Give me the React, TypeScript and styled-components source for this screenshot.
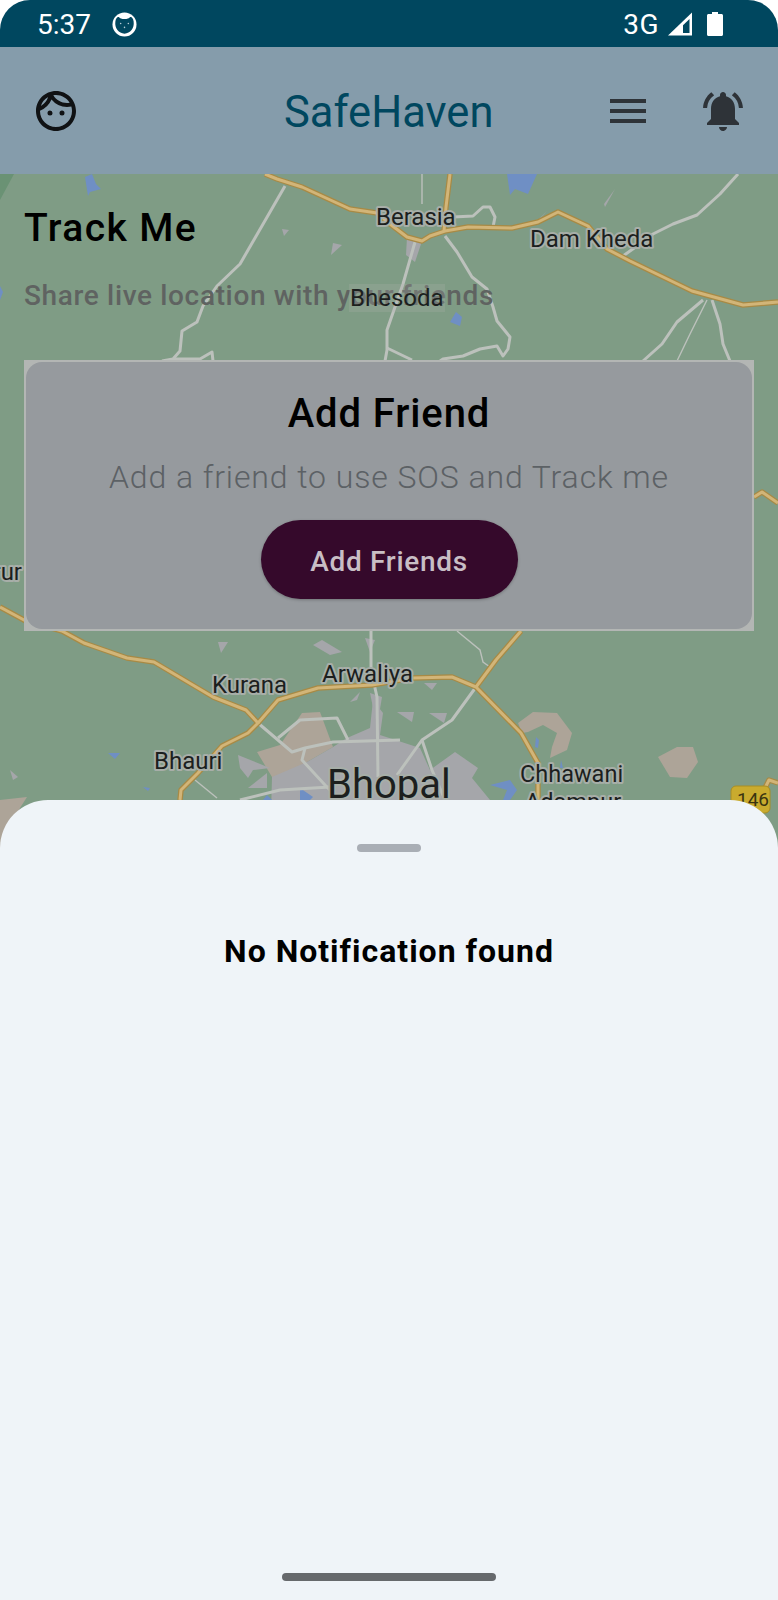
import React from "react";
import styled, { createGlobalStyle } from "styled-components";
import { MdMenu, MdNotificationsActive, MdOutlineFace } from "react-icons/md";

const GlobalStyle = createGlobalStyle`
  html, body {
    margin: 0;
    padding: 0;
    background: #ffffff;
    font-family: Roboto, "Noto Sans", sans-serif;
  }
`;

const Screen = styled.div`
  position: relative;
  width: 778px;
  height: 1600px;
  overflow: hidden;
  display: flex;
  flex-direction: column;
`;

const StatusBar = styled.div`
  height: 47px;
  flex-shrink: 0;
  box-sizing: border-box;
  display: flex;
  align-items: center;
  padding: 1px 55px 0 37px;
  background: #00475f;
  border-radius: 30px 30px 0 0;
  color: #ffffff;
  font-size: 28px;
`;

const StatusTime = styled.span`
  margin-right: 21px;
`;

const StatusRight = styled.div`
  margin-left: auto;
  display: flex;
  align-items: center;
`;

const Network = styled.span`
  margin-right: 8px;
  font-size: 28px;
  letter-spacing: 0.5px;
`;

const BatterySlot = styled.span`
  display: flex;
  margin-left: 14px;
`;

const Header = styled.header`
  height: 127px;
  flex-shrink: 0;
  box-sizing: border-box;
  display: flex;
  align-items: center;
  padding: 0 31px 0 32px;
  background: #859cab;
`;

const FaceButton = styled.div`
  display: flex;
  color: #101214;
`;

const AppTitle = styled.h1`
  margin: 4px auto 0 204px;
  font-size: 43.5px;
  font-weight: 400;
  color: #00475f;
`;

const HeaderActions = styled.div`
  display: flex;
  gap: 47px;
  color: #2e3338;

  svg {
    display: block;
  }
`;

const MapArea = styled.main`
  position: relative;
  height: 680px;
  flex-shrink: 0;
  box-sizing: border-box;
  padding: 28px 24px 0;
  background: #7f9c85;
`;

const MapDrawing = styled.svg`
  position: absolute;
  inset: 0;
  width: 778px;
  height: 680px;
`;

const PageTitle = styled.h2`
  position: relative;
  margin: 0;
  font-size: 39px;
  line-height: 52px;
  font-weight: 500;
  letter-spacing: 1.4px;
  color: #000000;
`;

const PageHint = styled.p`
  position: relative;
  margin: 23px 0 0;
  font-size: 28px;
  line-height: 38px;
  font-weight: 500;
  letter-spacing: 0.65px;
  color: #5f6361;
`;

const MapLabelAbove = styled.span`
  position: absolute;
  left: 349px;
  top: 110px;
  padding: 0 1px;
  font-size: 24px;
  line-height: 28px;
  color: #1c1f1e;
  background: rgba(170, 176, 170, 0.25);
`;

const CardFrame = styled.section`
  position: relative;
  width: 730px;
  height: 271px;
  margin-top: 45px;
  box-sizing: border-box;
  padding: 2px;
  background: #b3b6b4;
`;

const Card = styled.div`
  height: 100%;
  box-sizing: border-box;
  display: flex;
  flex-direction: column;
  align-items: center;
  padding-top: 29px;
  background: #969a9e;
  border-radius: 16px;
`;

const CardTitle = styled.h3`
  margin: 0;
  font-size: 40px;
  line-height: 46px;
  font-weight: 500;
  letter-spacing: 0.9px;
  color: #000000;
`;

const CardText = styled.p`
  margin: 20px 0 0;
  font-size: 32px;
  line-height: 40px;
  font-weight: 300;
  letter-spacing: 0.9px;
  color: #5c6165;
`;

const AddButton = styled.button`
  width: 257px;
  height: 79px;
  margin-top: 23px;
  padding: 4px 0 0;
  border: none;
  border-radius: 40px;
  background: #35092b;
  box-shadow: 0 1px 3px rgba(0, 0, 0, 0.25);
  font-family: inherit;
  font-size: 28px;
  font-weight: 500;
  letter-spacing: 0.7px;
  color: #c8bec5;
`;

const Sheet = styled.aside`
  position: absolute;
  left: 0;
  right: 0;
  top: 800px;
  bottom: 0;
  display: flex;
  flex-direction: column;
  align-items: center;
  background: #eff4f8;
  border-radius: 48px 48px 0 0;
`;

const SheetHandle = styled.div`
  width: 64px;
  height: 8px;
  margin-top: 44px;
  border-radius: 4px;
  background: #a9aeb5;
`;

const EmptyText = styled.p`
  margin: 79px 0 0;
  font-size: 32px;
  line-height: 40px;
  font-weight: 700;
  letter-spacing: 1px;
  color: #000000;
`;

const HomeIndicator = styled.div`
  width: 214px;
  height: 8px;
  margin-top: auto;
  margin-bottom: 19px;
  border-radius: 4px;
  background: #66696c;
`;

const LabelText = styled.text<{ $size?: number }>`
  font-family: Roboto, sans-serif;
  font-size: ${(p) => p.$size ?? 24}px;
  fill: #1c1f1e;
  stroke: #a7aea8;
  stroke-width: 4px;
  paint-order: stroke;
  stroke-linejoin: round;
`;

const BadgeText = styled.text`
  font-family: Roboto, sans-serif;
  font-size: 19px;
  fill: #3a3410;
`;

const yellowRoads = [
  "M265 174L277 179L302 187L350 209L377 213L390 224L407 237L422 241L430 236L445 231L468 227L512 228L538 222L558 212L588 226L607 249L630 261L692 291L743 305L778 302",
  "M450 174L446 207L444 231",
  "M0 607L24 620L62 631L84 643L127 658L154 662L213 697L246 710L258 723L248 733L222 746L198 773L181 790L180 800",
  "M258 723L278 700L318 688L372 685L412 678L452 677L476 687L521 733L538 763L538 810",
  "M521 631L496 660L476 687",
  "M754 497L762 492L778 503",
  "M764 790L769 780L778 783",
];

const whiteRoads = [
  "M285 186L240 264L217 286L203 306L197 322L182 331L180 351L173 359L162 361",
  "M173 359L200 359L212 352L213 361",
  "M453 217L473 216L483 207L490 207L495 217L493 227",
  "M445 236L457 252L472 277L487 289L493 307L497 321L510 337L508 349L503 356L497 346L480 349L463 356L443 359L440 361",
  "M415 242L403 284L387 330L387 350L385 361",
  "M387 348L412 360",
  "M738 174L720 194L697 215L673 224L653 234L637 246L623 256",
  "M703 300L677 322L662 344L643 361",
  "M712 300L720 324L723 344L730 361",
  "M371 631L371 670L377 697L378 777",
  "M258 723L292 752L305 748L333 742L400 740",
  "M278 738L300 720L337 718L348 740",
  "M476 687L452 720L422 740L397 775",
  "M422 740L432 770L445 800",
  "M305 748L302 760L325 785L340 800",
  "M240 800L280 790L330 787",
];

const thinRoads = [
  "M422 174L422 204",
  "M707 300L690 334L677 361",
  "M457 631L480 650L483 662L490 667",
  "M195 780L217 798",
];

const tanPatches = [
  "M257 752L280 745L302 713L320 712L333 747L307 762L287 777L272 777Z",
  "M518 723L533 712L557 713L572 733L567 750L550 758L552 747L557 733L543 725L528 732L522 733Z",
  "M658 757L677 747L693 747L698 762L687 778L670 777Z",
  "M0 800L27 797L20 808L0 860Z",
];

const greyPatches = [
  "M347 738L370 728L373 700L383 713L380 735L420 748L430 770L455 752L478 768L472 778L490 800L500 850L270 850L272 777L307 762L333 747Z",
  "M238 755L270 768L253 770L248 778L240 768Z",
  "M248 788L267 773L267 788Z",
  "M407 237L422 241L415 262L406 255Z",
  "M604 204L615 189L605 207Z",
  "M282 229L289 230L284 236Z",
  "M333 243L342 245L331 255Z",
  "M536 222L547 211L540 219Z",
  "M10 770L18 777L13 780Z",
  "M218 642L228 642L221 653Z",
  "M313 645L322 640L342 652L330 655Z",
  "M365 638L375 640L370 652Z",
  "M424 683L437 683L432 690Z",
  "M350 702L360 692L357 700Z",
  "M397 712L414 712L412 722Z",
  "M429 713L447 713L444 723Z",
  "M370 693L382 697L377 727Z",
];

const lakes = [
  "M85 177L92 174L96 184L101 189L90 192L88 196Z",
  "M507 174L537 174L528 194L515 189L510 195Z",
  "M450 322L456 312L462 317L460 326Z",
  "M0 286L3 292L0 300Z",
  "M490 785L510 780L517 790L510 800L503 800L507 790Z",
  "M300 788L313 797L310 800L300 800Z",
  "M263 800L267 795L272 800Z",
  "M536 737L539 740L538 748L535 747Z",
  "M561 760L563 768L560 768Z",
  "M108 753L120 753L115 759Z",
  "M143 787L150 788L148 791Z",
];

const labels: { x: number; y: number; text: string; size?: number; anchor?: string }[] = [
  { x: 376, y: 225, text: "Berasia" },
  { x: 530, y: 247, text: "Dam Kheda" },
  { x: 212, y: 693, text: "Kurana" },
  { x: 322, y: 682, text: "Arwaliya" },
  { x: 154, y: 769, text: "Bhauri" },
  { x: 520, y: 782, text: "Chhawani", size: 23.5 },
  { x: 525, y: 810, text: "Adampur", size: 23.5 },
  { x: 327, y: 798, text: "Bhopal", size: 40 },
  { x: 22, y: 580, text: "Sirur", size: 24, anchor: "end" },
];

const MapBackground = () => (
  <MapDrawing viewBox="0 174 778 680">
    <path d="M0 174L14 174L0 200Z" fill="#6a9274" />
    {tanPatches.map((d) => (
      <path key={d} d={d} fill="#ada498" />
    ))}
    {greyPatches.map((d) => (
      <path key={d} d={d} fill="#a5a6aa" />
    ))}
    {lakes.map((d) => (
      <path key={d} d={d} fill="#6f8fc4" />
    ))}
    {whiteRoads.map((d) => (
      <path key={d} d={d} fill="none" stroke="#bcc1bc" strokeWidth="3" strokeLinejoin="round" />
    ))}
    {thinRoads.map((d) => (
      <path key={d} d={d} fill="none" stroke="#bcc1bc" strokeWidth="1.4" />
    ))}
    {yellowRoads.map((d) => (
      <path key={d} d={d} fill="none" stroke="#a88a45" strokeWidth="5.5" strokeLinejoin="round" />
    ))}
    {yellowRoads.map((d) => (
      <path key={`${d}-in`} d={d} fill="none" stroke="#d2b578" strokeWidth="3" strokeLinejoin="round" />
    ))}
    {labels.map((l) => (
      <LabelText key={l.text} x={l.x} y={l.y} $size={l.size} textAnchor={l.anchor ?? "start"}>
        {l.text}
      </LabelText>
    ))}
    <rect x="731" y="786" width="39" height="27" rx="5" fill="#c9ab2e" stroke="#a88e24" />
    <BadgeText x="737" y="806">146</BadgeText>
  </MapDrawing>
);

const AppStatusIcon = () => (
  <svg width="25" height="25" viewBox="0 0 26 26">
    <circle cx="13" cy="13" r="12.5" fill="#ffffff" />
    <path d="M3.5 10C4 6 6 4.5 7.5 5.5C8 8 18 8 18.5 5.5C20 4.5 22 6 22.5 10C23.5 17 19 22.5 13 22.5C7 22.5 2.5 17 3.5 10Z" fill="#00475f" />
    <circle cx="9" cy="12" r="0.8" fill="#b8cdd6" />
    <circle cx="17" cy="12" r="0.8" fill="#b8cdd6" />
    <circle cx="13" cy="16" r="0.8" fill="#b8cdd6" />
  </svg>
);

const SignalIcon = () => (
  <svg width="26" height="24" viewBox="0 0 26 24">
    <path d="M1 23.5L25 23.5L25 0.5Z" fill="#ffffff" />
    <path d="M16 21L22.5 21L22.5 7L16 13.2Z" fill="#00475f" />
  </svg>
);

const BatteryIcon = () => (
  <svg width="16" height="24" viewBox="0 0 16 24">
    <path d="M5 0H11V2H14.5C15.3 2 16 2.7 16 3.5V22.5C16 23.3 15.3 24 14.5 24H1.5C0.7 24 0 23.3 0 22.5V3.5C0 2.7 0.7 2 1.5 2H5Z" fill="#ffffff" />
  </svg>
);

export default function App() {
  return (
    <Screen>
      <GlobalStyle />
      <StatusBar>
        <StatusTime>5:37</StatusTime>
        <AppStatusIcon />
        <StatusRight>
          <Network>3G</Network>
          <SignalIcon />
          <BatterySlot>
            <BatteryIcon />
          </BatterySlot>
        </StatusRight>
      </StatusBar>
      <Header>
        <FaceButton>
          <MdOutlineFace size={48} />
        </FaceButton>
        <AppTitle>SafeHaven</AppTitle>
        <HeaderActions>
          <MdMenu size={48} />
          <MdNotificationsActive size={48} />
        </HeaderActions>
      </Header>
      <MapArea>
        <MapBackground />
        <PageTitle>Track Me</PageTitle>
        <PageHint>Share live location with your friends</PageHint>
        <MapLabelAbove>Bhesoda</MapLabelAbove>
        <CardFrame>
          <Card>
            <CardTitle>Add Friend</CardTitle>
            <CardText>Add a friend to use SOS and Track me</CardText>
            <AddButton>Add Friends</AddButton>
          </Card>
        </CardFrame>
      </MapArea>
      <Sheet>
        <SheetHandle />
        <EmptyText>No Notification found</EmptyText>
        <HomeIndicator />
      </Sheet>
    </Screen>
  );
}
